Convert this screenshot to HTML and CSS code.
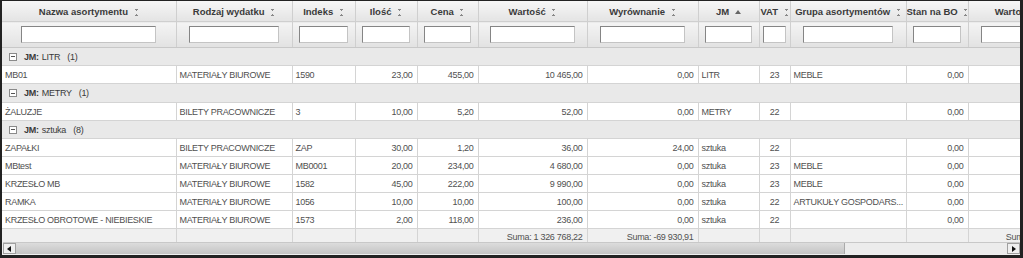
FILE: index.html
```html
<!DOCTYPE html>
<html>

<head>
    <title>Asortyment</title>
    <link rel="stylesheet" href="styles.css">
</head>

<body>
    <div class="grid">
        <div class="viewport">
            <table class="data">
                <colgroup>
                    <col style="width: 174px">
                    <col style="width: 116px">
                    <col style="width: 63px">
                    <col style="width: 62px">
                    <col style="width: 61px">
                    <col style="width: 109px">
                    <col style="width: 111px">
                    <col style="width: 61px">
                    <col style="width: 31px">
                    <col style="width: 116px">
                    <col style="width: 62px">
                    <col style="width: 118px">
                </colgroup>
                <thead>
                    <tr class="titles">
                        <th>Nazwa asortymentu <span class="sort"></span></th>
                        <th>Rodzaj wydatku <span class="sort"></span></th>
                        <th>Indeks <span class="sort"></span></th>
                        <th>Ilość <span class="sort"></span></th>
                        <th>Cena <span class="sort"></span></th>
                        <th>Wartość <span class="sort"></span></th>
                        <th>Wyrównanie <span class="sort"></span></th>
                        <th>JM <span class="sort-asc"></span></th>
                        <th>VAT <span class="sort"></span></th>
                        <th>Grupa asortymentów <span class="sort"></span></th>
                        <th>Stan na BO <span class="sort"></span></th>
                        <th>Wartość BO <span class="sort"></span></th>
                    </tr>
                    <tr class="filters">
                        <th><input type="text"></th>
                        <th><input type="text"></th>
                        <th><input type="text"></th>
                        <th><input type="text"></th>
                        <th><input type="text"></th>
                        <th><input type="text"></th>
                        <th><input type="text"></th>
                        <th><input type="text"></th>
                        <th><input type="text"></th>
                        <th><input type="text"></th>
                        <th><input type="text"></th>
                        <th><input type="text"></th>
                    </tr>
                </thead>
                <tbody>
                    <tr class="group">
                        <td colspan="12"><span class="toggle"></span><b>JM:</b> LITR <span class="count">(1)</span></td>
                    </tr>
                    <tr>
                        <td>MB01</td>
                        <td>MATERIAŁY BIUROWE</td>
                        <td>1590</td>
                        <td class="num">23,00</td>
                        <td class="num">455,00</td>
                        <td class="num">10 465,00</td>
                        <td class="num">0,00</td>
                        <td>LITR</td>
                        <td class="mid">23</td>
                        <td>MEBLE</td>
                        <td class="num">0,00</td>
                        <td></td>
                    </tr>
                    <tr class="group tall">
                        <td colspan="12"><span class="toggle"></span><b>JM:</b> METRY <span class="count">(1)</span></td>
                    </tr>
                    <tr>
                        <td>ŻALUZJE</td>
                        <td>BILETY PRACOWNICZE</td>
                        <td>3</td>
                        <td class="num">10,00</td>
                        <td class="num">5,20</td>
                        <td class="num">52,00</td>
                        <td class="num">0,00</td>
                        <td>METRY</td>
                        <td class="mid">22</td>
                        <td></td>
                        <td class="num">0,00</td>
                        <td></td>
                    </tr>
                    <tr class="group">
                        <td colspan="12"><span class="toggle"></span><b>JM:</b> sztuka <span class="count">(8)</span></td>
                    </tr>
                    <tr>
                        <td>ZAPAŁKI</td>
                        <td>BILETY PRACOWNICZE</td>
                        <td>ZAP</td>
                        <td class="num">30,00</td>
                        <td class="num">1,20</td>
                        <td class="num">36,00</td>
                        <td class="num">24,00</td>
                        <td>sztuka</td>
                        <td class="mid">22</td>
                        <td></td>
                        <td class="num">0,00</td>
                        <td></td>
                    </tr>
                    <tr>
                        <td>MBtest</td>
                        <td>MATERIAŁY BIUROWE</td>
                        <td>MB0001</td>
                        <td class="num">20,00</td>
                        <td class="num">234,00</td>
                        <td class="num">4 680,00</td>
                        <td class="num">0,00</td>
                        <td>sztuka</td>
                        <td class="mid">23</td>
                        <td>MEBLE</td>
                        <td class="num">0,00</td>
                        <td></td>
                    </tr>
                    <tr>
                        <td>KRZESŁO MB</td>
                        <td>MATERIAŁY BIUROWE</td>
                        <td>1582</td>
                        <td class="num">45,00</td>
                        <td class="num">222,00</td>
                        <td class="num">9 990,00</td>
                        <td class="num">0,00</td>
                        <td>sztuka</td>
                        <td class="mid">23</td>
                        <td>MEBLE</td>
                        <td class="num">0,00</td>
                        <td></td>
                    </tr>
                    <tr>
                        <td>RAMKA</td>
                        <td>MATERIAŁY BIUROWE</td>
                        <td>1056</td>
                        <td class="num">10,00</td>
                        <td class="num">10,00</td>
                        <td class="num">100,00</td>
                        <td class="num">0,00</td>
                        <td>sztuka</td>
                        <td class="mid">22</td>
                        <td>ARTUKUŁY GOSPODARS...</td>
                        <td class="num">0,00</td>
                        <td></td>
                    </tr>
                    <tr>
                        <td>KRZESŁO OBROTOWE - NIEBIESKIE</td>
                        <td>MATERIAŁY BIUROWE</td>
                        <td>1573</td>
                        <td class="num">2,00</td>
                        <td class="num">118,00</td>
                        <td class="num">236,00</td>
                        <td class="num">0,00</td>
                        <td>sztuka</td>
                        <td class="mid">22</td>
                        <td></td>
                        <td class="num">0,00</td>
                        <td></td>
                    </tr>
                </tbody>
                <tfoot>
                    <tr>
                        <td></td>
                        <td></td>
                        <td></td>
                        <td></td>
                        <td></td>
                        <td class="num">Suma: 1 326 768,22</td>
                        <td class="num">Suma: -69 930,91</td>
                        <td></td>
                        <td></td>
                        <td></td>
                        <td></td>
                        <td class="num">Suma: 1 326 768,22</td>
                    </tr>
                </tfoot>
            </table>
        </div>
        <div class="hscroll">
            <span class="arrow left"></span>
            <div class="track">
                <div class="thumb"></div>
            </div>
            <span class="arrow right"></span>
        </div>
    </div>
</body>

</html>
```

FILE: styles.css
```css
body {
    margin: 0;
    background-color: #222;
    font-family: "Liberation Sans", Arial, sans-serif;
}

.grid {
    height: 254px;
    margin: 1px 3px 0 2px;
    background-color: #f0f0f0;
    display: flex;
    flex-direction: column;
    overflow: hidden;
}

.viewport {
    flex: 1;
    overflow: hidden;
}

.data {
    border-collapse: collapse;
    table-layout: fixed;
    width: 1084px;
    font-size: 9px;
    letter-spacing: -0.3px;
    color: #505050;
}

.data th,
.data td {
    overflow: hidden;
    white-space: nowrap;
}

.titles th {
    height: 20px;
    padding: 0;
    font-size: 9.5px;
    letter-spacing: 0;
    color: #3a3a3a;
    background: linear-gradient(#f6f6f6, #e4e4e4);
    border-right: 1px solid #cfcfcf;
    border-bottom: 1px solid #cfcfcf;
}

.filters th {
    height: 25px;
    padding: 0;
    background: linear-gradient(#f4f4f4, #e2e2e2);
    border-right: 1px solid #cfcfcf;
    border-bottom: 1px solid #c8c8c8;
}

.filters input {
    display: block;
    box-sizing: border-box;
    width: 78%;
    height: 17px;
    margin: 0 auto;
    padding: 0;
    background-color: white;
    border: 1px solid #c4c4c4;
    border-top-color: #858585;
    border-left-color: #858585;
}

.sort {
    display: inline-block;
    width: 5px;
    height: 7px;
    margin-left: 3px;
    vertical-align: -1px;
    background:
        linear-gradient(to top right, transparent 50%, #888 50%) 0 0 / 3px 2px no-repeat,
        linear-gradient(to top left, transparent 50%, #888 50%) 2px 0 / 3px 2px no-repeat,
        linear-gradient(to bottom right, transparent 50%, #888 50%) 0 5px / 3px 2px no-repeat,
        linear-gradient(to bottom left, transparent 50%, #888 50%) 2px 5px / 3px 2px no-repeat;
}

.sort-asc {
    display: inline-block;
    width: 0;
    height: 0;
    margin-left: 3px;
    vertical-align: 1px;
    border-left: 3px solid transparent;
    border-right: 3px solid transparent;
    border-bottom: 4px solid #666;
}

.data tbody td {
    height: 17px;
    padding: 0 3px;
    background-color: white;
    border-right: 1px solid #d4d4d4;
    border-bottom: 1px solid #d4d4d4;
}

.data tbody .group td {
    background-color: #e9e9e9;
    border-right: none;
    padding-left: 7px;
    color: #3a3a3a;
}

.data tbody .group.tall td {
    height: 18px;
}

.group b {
    margin-right: 1px;
}

.count {
    margin-left: 5px;
}

.toggle {
    display: inline-block;
    box-sizing: border-box;
    width: 8px;
    height: 8px;
    margin-right: 7px;
    vertical-align: -1px;
    border: 1px solid #8a8a8a;
    background: linear-gradient(#555, #555) center / 4px 1px no-repeat, white;
}

.num {
    text-align: right;
}

.data td.num {
    padding-right: 4px;
}

.mid {
    text-align: center;
}

.data tfoot td {
    height: 16px;
    padding: 0 3px;
    background-color: #f0f0f0;
    border-right: 1px solid #d4d4d4;
}

.hscroll {
    height: 11px;
    margin: 0 0 1px 1px;
    display: flex;
    background-color: #e6e6e6;
    border-top: 1px solid #c8c8c8;
}

.arrow {
    width: 13px;
    background-color: #efefef;
    border: 1px solid #a0a0a0;
    box-sizing: border-box;
    position: relative;
}

.arrow::after {
    content: "";
    position: absolute;
    top: 2px;
    border-top: 3px solid transparent;
    border-bottom: 3px solid transparent;
}

.arrow.left::after {
    left: 3px;
    border-right: 4px solid #111;
}

.arrow.right::after {
    left: 4px;
    border-left: 4px solid #111;
}

.track {
    flex: 1;
    background-color: #ececec;
}

.thumb {
    width: 829px;
    height: 100%;
    background: linear-gradient(#dcdcdc, #c4c4c4);
    border-right: 1px solid #aaa;
    box-sizing: border-box;
}
```
